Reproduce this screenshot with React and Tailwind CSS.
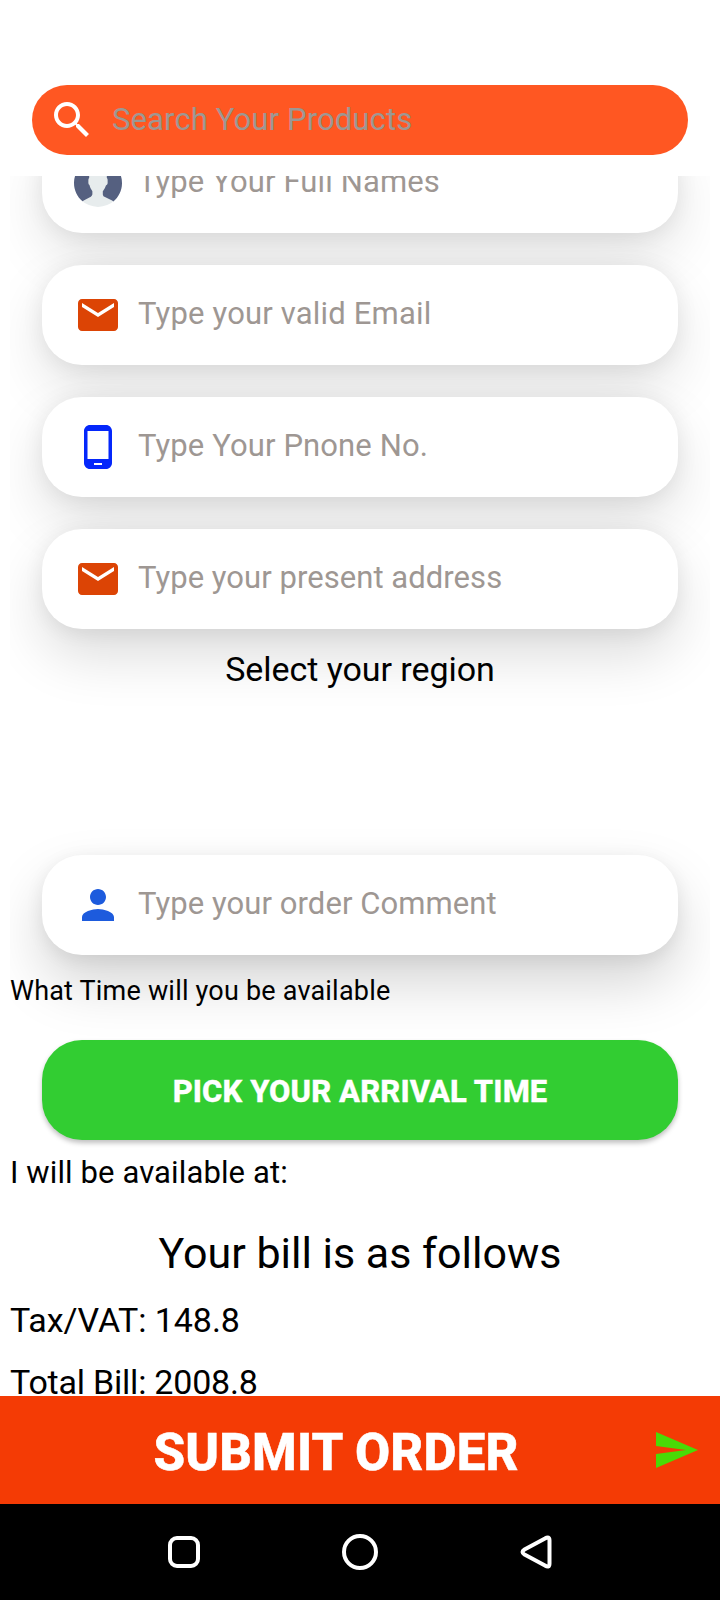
const AvatarIcon = () => (
  <svg className="size-12 shrink-0" viewBox="0 0 53 53">
    <circle cx="26.5" cy="26.5" r="26.4" fill="#e7eced" />
    <path
      fill="#556080"
      d="M26.953,0.004C12.32-0.246,0.254,11.414,0.004,26.047C-0.138,34.344,3.56,41.801,9.448,46.76c0.385-0.336,0.798-0.644,1.257-0.894l7.907-4.313c1.037-0.566,1.683-1.653,1.683-2.835v-3.24c0,0-2.321-2.776-3.206-6.633c-0.734-0.475-1.226-1.296-1.226-2.231v-3.546c0-0.78,0.347-1.477,0.886-1.965v-5.126c0,0-1.053-7.977,9.75-7.977s9.75,7.977,9.75,7.977v5.126c0.54,0.488,0.886,1.185,0.886,1.965v3.546c0,1.192-0.8,2.195-1.886,2.53c-0.605,1.881-1.478,3.674-2.632,5.304c-0.291,0.411-0.563,0.759-0.801,1.03V38.8c0,1.223,0.691,2.342,1.785,2.888l8.467,4.233c0.508,0.254,0.967,0.575,1.39,0.932c5.71-4.762,9.399-11.882,9.536-19.9C53.246,12.32,41.587,0.254,26.953,0.004z"
    />
  </svg>
);

const Glyph = ({ d, color }) => (
  <svg className="size-12 shrink-0" viewBox="0 0 24 24" fill={color}>
    <path d={d} />
  </svg>
);

const MAIL =
  "M20 4H4c-1.1 0-1.99.9-1.99 2L2 18c0 1.1.9 2 2 2h16c1.1 0 2-.9 2-2V6c0-1.1-.9-2-2-2zm0 4l-8 5-8-5V6l8 5 8-5v2z";
const PHONE =
  "M16 1H8C6.34 1 5 2.34 5 4v16c0 1.66 1.34 3 3 3h8c1.66 0 3-1.34 3-3V4c0-1.66-1.34-3-3-3zm-2 20h-4v-1h4v1zm3.25-3H6.75V4h10.5v14z";
const PERSON =
  "M12 12c2.21 0 4-1.79 4-4s-1.79-4-4-4-4 1.79-4 4 1.79 4 4 4zm0 2c-2.67 0-8 1.34-8 4v2h16v-2c0-2.66-5.33-4-8-4z";
const SEARCH =
  "M15.5 14h-.79l-.28-.27C15.41 12.59 16 11.11 16 9.5 16 5.91 13.09 3 9.5 3S3 5.91 3 9.5 5.91 16 9.5 16c1.61 0 3.09-.59 4.23-1.57l.27.28v.79l5 4.99L20.49 19l-4.99-5zm-6 0C7.01 14 5 11.99 5 9.5S7.01 5 9.5 5 14 7.01 14 9.5 11.99 14 9.5 14z";
const SEND = "M2.01 21L23 12 2.01 3 2 10l15 2-15 2z";

// Shadows deepen towards the bottom of the screen, away from the light.
const SHADOWS = [
  "shadow-[0_22px_56px_rgba(0,0,0,0.12),0_2px_22px_rgba(0,0,0,0.07)]",
  "shadow-[0_23px_56px_rgba(0,0,0,0.12),0_2px_22px_rgba(0,0,0,0.07)]",
  "shadow-[0_24px_56px_rgba(0,0,0,0.13),0_2px_22px_rgba(0,0,0,0.07)]",
  "shadow-[0_26px_56px_rgba(0,0,0,0.14),0_3px_20px_rgba(0,0,0,0.07)]",
  "shadow-[0_28px_56px_rgba(0,0,0,0.17),0_4px_18px_rgba(0,0,0,0.075)]",
];

const Field = ({ icon, label, depth, tracking = "tracking-[0.12px]" }) => (
  <div className={`mx-8 flex h-[100px] shrink-0 items-center rounded-[40px] bg-white pl-8 ${SHADOWS[depth]}`}>
    {icon}
    <span className={`-mt-0.5 ml-4 text-[31px] leading-9 text-[#9e9793] ${tracking}`}>{label}</span>
  </div>
);

export default function App() {
  return (
    <div className="flex h-[1600px] w-[720px] flex-col overflow-hidden bg-white font-['Roboto',sans-serif] text-black">
      <header className="h-[176px] shrink-0 px-8 pt-[85px]">
        <div className="flex h-[70px] items-center rounded-full bg-[#ff5722] pl-4">
          <Glyph d={SEARCH} color="#ffffff" />
          <span className="ml-4 text-[31px] leading-9 tracking-[0.12px] text-[#9e9793]">Search Your Products</span>
        </div>
      </header>

      <main className="mx-[10px] h-[1220px] shrink-0 overflow-hidden">
        <div className="-mt-[43px] flex flex-col">
          <div className="flex flex-col gap-8">
            <Field depth={0} icon={<AvatarIcon />} label="Type Your Full Names" />
            <Field depth={1} icon={<Glyph d={MAIL} color="#dc4405" />} label="Type your valid Email" tracking="tracking-[0.18px]" />
            <Field depth={2} icon={<Glyph d={PHONE} color="#0427fb" />} label="Type Your Pnone No." />
            <Field depth={3} icon={<Glyph d={MAIL} color="#dc4405" />} label="Type your present address" tracking="tracking-[0.05px]" />
          </div>
          <h2 className="mt-5 h-[206px] text-center text-[34px] leading-10 tracking-[-0.05px]">Select your region</h2>
          <Field depth={4} icon={<Glyph d={PERSON} color="#1d5bdd" />} label="Type your order Comment" tracking="tracking-[0.08px]" />
          <p className="mt-5 h-[65px] text-[27px] leading-8 tracking-[0.2px]">What Time will you be available</p>
          <button className="mx-8 h-[100px] rounded-[40px] bg-[#32cd32] pt-[5px] text-[31px] font-extrabold tracking-[0.08px] text-white shadow-[0_3px_5px_rgba(0,0,0,0.25)] [-webkit-text-stroke:0.3px_white]">
            PICK YOUR ARRIVAL TIME
          </button>
          <p className="mt-[15px] text-[31px] leading-9 tracking-[0.12px]">I will be available at:</p>
          <h1 className="mt-[37px] text-center text-[43px] leading-[50px]">Your bill is as follows</h1>
          <p className="mt-[22px] text-[34px] leading-10 tracking-[-0.05px]">Tax/VAT: 148.8</p>
          <p className="mt-[22px] text-[34px] leading-10 tracking-[-0.22px]">Total Bill: 2008.8</p>
        </div>
      </main>

      <div className="flex h-[108px] shrink-0 items-center bg-[#f43b05] pr-5 pl-5">
        <span className="flex-1 pt-[5px] text-center text-[51px] leading-none font-extrabold tracking-[0.15px] text-white [-webkit-text-stroke:0.5px_white]">
          SUBMIT ORDER
        </span>
        <Glyph d={SEND} color="#4adb06" />
      </div>

      <nav className="flex h-24 shrink-0 items-center justify-center gap-[136px] bg-black">
        <svg className="size-10" viewBox="0 0 40 40" fill="none" stroke="#fff" strokeWidth="4">
          <rect x="6" y="6" width="28" height="28" rx="7" />
        </svg>
        <svg className="size-10" viewBox="0 0 40 40" fill="none" stroke="#fff" strokeWidth="4">
          <circle cx="20" cy="20" r="16" />
        </svg>
        <svg className="size-10" viewBox="0 0 40 40" fill="none" stroke="#fff" strokeWidth="4" strokeLinejoin="round">
          <path d="M29 6.500Q33.500 3.500 33.500 8.500V31.500Q33.500 36.500 29 33.500L8.500 22.500Q4.500 20 8.500 17.500Z" />
        </svg>
      </nav>
    </div>
  );
}
